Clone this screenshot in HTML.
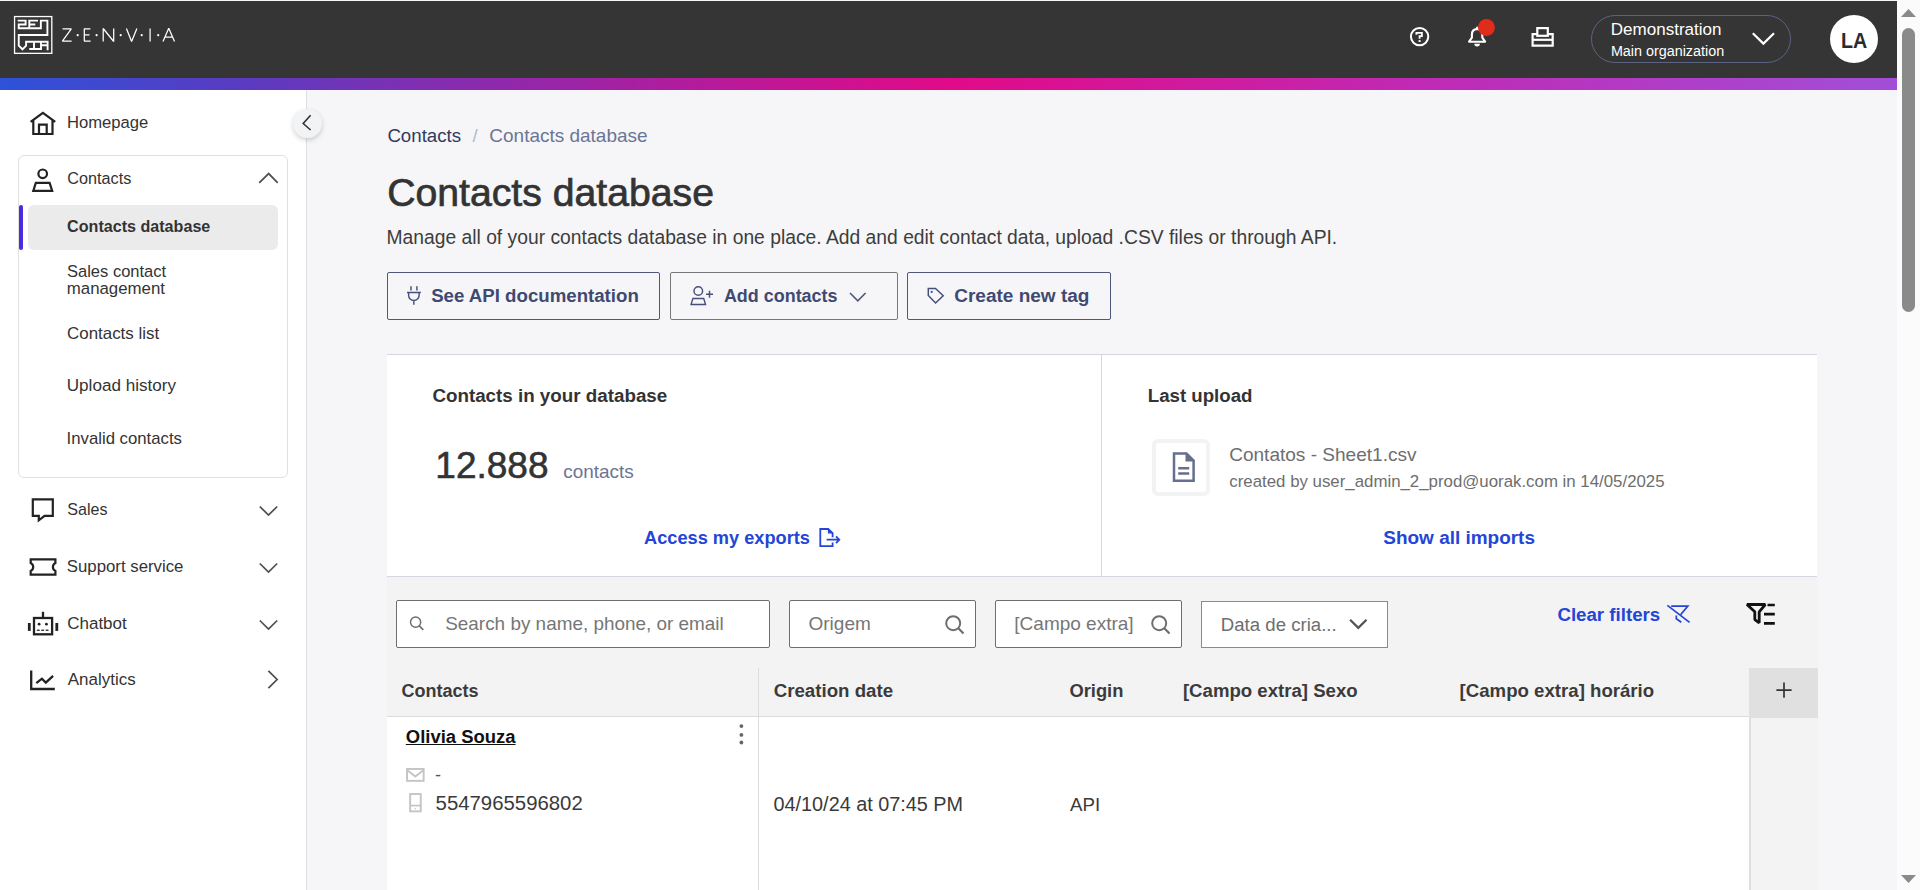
<!DOCTYPE html>
<html><head><meta charset="utf-8"><title>Contacts database</title>
<style>
html,body{margin:0;padding:0;width:1920px;height:890px;overflow:hidden;background:#fff;}
body{position:relative;font-family:"Liberation Sans",sans-serif;}
.t{position:absolute;white-space:nowrap;line-height:normal;}
.r{position:absolute;}
.s{position:absolute;overflow:visible;}
</style></head><body>
<div class="r" style="left:0px;top:0px;width:1897px;height:890px;background:#f6f6f8"></div>
<div class="r" style="left:0px;top:1px;width:1897px;height:77px;background:#353535"></div>
<div class="r" style="left:0px;top:78px;width:1897px;height:12px;background:linear-gradient(90deg,#2d52d9 0%,#5a3cc2 12.5%,#872caf 24%,#e10a88 50%,#c02ab4 75%,#a24ed8 100%)"></div>
<div class="r" style="left:0px;top:90px;width:306px;height:800px;background:#fff"></div>
<div class="r" style="left:306px;top:90px;width:1px;height:800px;background:#e0e0e0"></div>
<div class="r" style="left:1897px;top:0px;width:23px;height:890px;background:#fbfbfb"></div>
<svg class="s" style="left:1897px;top:0px;" width="23" height="890" viewBox="0 0 23 890"><path d="M4 17 L11.5 9 L19 17 Z" fill="#8a8a8a"/><rect x="5" y="28" width="13" height="284" rx="6.5" fill="#8a8a8a"/><path d="M4 875 L19 875 L11.5 883 Z" fill="#8a8a8a"/></svg>
<svg class="s" style="left:0px;top:0px" width="60" height="78" viewBox="0 0 60 78"><rect x="14.55" y="16.55" width="37.25" height="36.8" fill="none" stroke="#fff" stroke-width="1.3"/><g fill="none" stroke="#fff" stroke-width="1.9" stroke-linecap="butt" stroke-linejoin="miter"><path d="M17.7 20.6 H25.6 V24.5 H18.7 V28.3 H40.85 V20.6 H47.4 V35 H18.75 V45.6 L22.5 49.3 L26.1 45.6 V41.75 H47.6 V50.2"/><path d="M38 20.6 H29.3 V28.3 M29.3 24.5 H35.3"/><path d="M34 41.75 V49.05 M29.3 49.05 H41 V41.75 M41 45.25 H47.6"/></g></svg>
<svg class="s" style="left:0px;top:0px;" width="200" height="78" viewBox="0 0 200 78"><g fill="none" stroke="#fff" stroke-width="1.25" stroke-linejoin="bevel"><path d="M62.6 28.8 H71.3 L62.4 41.1 H71.6"/><path d="M90.4 28.8 H84.3 V41.1 H90.6 M84.3 34.8 H89.5"/><path d="M103.2 41.5 V28.5 L113.7 41.5 V28.5"/><path d="M126.4 28.6 L131.6 41.5 L136.9 28.6"/><path d="M150.1 28.6 V41.5"/><path d="M163 41.5 L168.75 28.3 L174.5 41.5 M165 37 H172.5"/></g><g fill="#fff"><circle cx="77.7" cy="35.2" r="1.1"/><circle cx="96.6" cy="35.2" r="1.1"/><circle cx="120.7" cy="35.2" r="1.1"/><circle cx="141.7" cy="35.2" r="1.1"/><circle cx="158.2" cy="35.2" r="1.1"/></g></svg>
<svg class="s" style="left:1400px;top:15px" width="40" height="40" viewBox="1400 15 40 40"><circle cx="1419.6" cy="36.6" r="8.7" fill="none" stroke="#fff" stroke-width="2"/><path d="M1416.4 34.8 V32.8 H1421.9 V36.1 H1419.6 V38.7" fill="none" stroke="#fff" stroke-width="1.8" stroke-linejoin="miter"/><rect x="1418.6" y="40.1" width="2" height="1.9" fill="#fff"/></svg>
<svg class="s" style="left:1460px;top:10px" width="45" height="45" viewBox="1460 10 45 45"><path d="M1477.1 28.9 Q1471.9 29.4 1471.9 34.6 V37.6 L1469.1 41.7 H1485.1 L1482.3 37.6 V34.6 Q1482.3 29.4 1477.1 28.9 Z" fill="none" stroke="#fff" stroke-width="2.1" stroke-linejoin="round"/><rect x="1476.2" y="26.7" width="1.9" height="2.4" fill="#fff"/><path d="M1474.3 43.8 H1479.9 A2.8 2.7 0 0 1 1474.3 43.8 Z" fill="#fff"/><circle cx="1486.4" cy="27.5" r="8.5" fill="#e02d1b"/></svg>
<svg class="s" style="left:1525px;top:15px" width="40" height="40" viewBox="1525 15 40 40"><g fill="none" stroke="#fff" stroke-width="2.2"><rect x="1537.3" y="28.1" width="10.5" height="7.7"/><path d="M1537.3 34.1 H1532.6 V45.7 H1552.7 V34.1 H1547.8"/><path d="M1532.6 39.8 H1552.7"/></g></svg>
<div class="r" style="left:1591px;top:15px;width:200px;height:48px;border:1px solid #5b6282;border-radius:24px;box-sizing:border-box"></div>
<div class="t" style="left:1610.79px;top:20.08px;font-size:17.04px;color:#fff;font-weight:400;">Demonstration</div>
<div class="t" style="left:1610.93px;top:43.01px;font-size:14.35px;color:#fff;font-weight:400;">Main organization</div>
<svg class="s" style="left:1745px;top:25px;" width="36" height="26" viewBox="0 0 36 26"><path d="M7.8 8.2 L18.4 18.6 L29 8.2" fill="none" stroke="#fff" stroke-width="2.2"/></svg>
<div class="r" style="left:1830px;top:15px;width:48px;height:48px;background:#fff;border-radius:50%"></div>
<div class="t" style="left:1840.50px;top:26.98px;font-size:22.90px;color:#2b2b2b;font-weight:700;transform:scaleX(0.86);transform-origin:0 0;">LA</div>
<div class="r" style="left:293px;top:109px;width:29px;height:29px;background:#f2f3f5;border-radius:50%;box-shadow:0 2px 5px rgba(0,0,0,0.18)"></div>
<svg class="s" style="left:293px;top:109px;" width="29" height="29" viewBox="0 0 29 29"><path d="M17.6 6.2 L10.2 14.5 L17.6 21" fill="none" stroke="#333" stroke-width="1.6"/></svg>
<svg class="s" style="left:26px;top:106px;" width="34" height="34" viewBox="0 0 34 34"><g fill="none" stroke="#222" stroke-width="2.2"><path d="M4.6 15.8 L16.9 6.8 L29.2 15.8 M7.3 14 V28 H26.5 V14"/><path d="M13 28 V18.7 H20.7 V28"/></g></svg>
<div class="t" style="left:67.01px;top:113.04px;font-size:16.64px;color:#333;font-weight:400;">Homepage</div>
<div class="r" style="left:18px;top:155px;width:270px;height:323px;border:1px solid #e0e0e0;border-radius:6px;box-sizing:border-box"></div>
<svg class="s" style="left:26px;top:162px;" width="34" height="34" viewBox="0 0 34 34"><g fill="none" stroke="#222" stroke-width="2.2"><circle cx="16.7" cy="11.8" r="4.3"/><path d="M9.8 20.9 H23.6 L26.2 28.8 H7.3 Z" stroke-linejoin="miter"/></g></svg>
<div class="t" style="left:67.36px;top:169.02px;font-size:16.22px;color:#333;font-weight:400;">Contacts</div>
<svg class="s" style="left:255px;top:168px;" width="28" height="20" viewBox="0 0 28 20"><path d="M4.2 14.9 L13.7 5.6 L22.7 14.9" fill="none" stroke="#505050" stroke-width="1.75"/></svg>
<div class="r" style="left:28px;top:205px;width:250px;height:45px;background:#ebebeb;border-radius:6px"></div>
<div class="r" style="left:19px;top:205px;width:4px;height:45px;background:#4b2ae0;border-radius:2px"></div>
<div class="t" style="left:67.07px;top:217.41px;font-size:16.12px;color:#333;font-weight:700;">Contacts database</div>
<div class="t" style="left:67.01px;top:262.05px;font-size:16.52px;color:#333;font-weight:400;">Sales contact</div>
<div class="t" style="left:66.77px;top:278.96px;font-size:16.84px;color:#333;font-weight:400;">management</div>
<div class="t" style="left:67.04px;top:324.00px;font-size:16.91px;color:#333;font-weight:400;">Contacts list</div>
<div class="t" style="left:66.74px;top:376.42px;font-size:17.10px;color:#333;font-weight:400;">Upload history</div>
<div class="t" style="left:66.60px;top:428.75px;font-size:16.74px;color:#333;font-weight:400;">Invalid contacts</div>
<svg class="s" style="left:26px;top:492px" width="34" height="34" viewBox="26 492 34 34"><path d="M32.8 499.4 H52.8 V515.8 H44.5 L38.8 520.3 V515.8 H32.8 Z" fill="none" stroke="#222" stroke-width="2.2" stroke-linejoin="miter"/></svg>
<div class="t" style="left:67.32px;top:500.43px;font-size:16.10px;color:#333;font-weight:400;">Sales</div>
<svg class="s" style="left:26px;top:552px" width="34" height="34" viewBox="26 552 34 34"><path d="M30.7 559.4 H55.4 V563 A4.45 4.45 0 0 0 55.4 571 V574.7 H30.7 V571 A4.45 4.45 0 0 0 30.7 563 Z" fill="none" stroke="#222" stroke-width="2.2"/></svg>
<div class="t" style="left:66.80px;top:556.60px;font-size:16.80px;color:#333;font-weight:400;">Support service</div>
<svg class="s" style="left:26px;top:606px;" width="34" height="34" viewBox="0 0 34 34"><g fill="none" stroke="#222" stroke-width="2.3"><rect x="8" y="12" width="18.1" height="16.3"/><path d="M17 5.8 V12"/></g><g fill="#222"><rect x="1.9" y="17" width="2.8" height="7.9"/><rect x="29.4" y="17" width="2.8" height="7.9"/><circle cx="13.1" cy="18.2" r="1.4"/><circle cx="20.4" cy="18.2" r="1.4"/><rect x="10.9" y="23.6" width="2.8" height="1.3"/><rect x="15.3" y="23.6" width="2.8" height="1.3"/><rect x="19.7" y="23.6" width="2.8" height="1.3"/></g></svg>
<div class="t" style="left:67.24px;top:613.62px;font-size:16.99px;color:#333;font-weight:400;">Chatbot</div>
<svg class="s" style="left:26px;top:664px;" width="34" height="34" viewBox="0 0 34 34"><g fill="none" stroke="#222" stroke-width="2.3"><path d="M5.2 6.5 V25 H28.8"/><path d="M10.3 19.1 L15.9 14.7 L19.8 18.6 L27.1 11.8"/></g></svg>
<div class="t" style="left:67.78px;top:670.24px;font-size:16.97px;color:#333;font-weight:400;">Analytics</div>
<svg class="s" style="left:255px;top:500px;" width="28" height="20" viewBox="0 0 28 20"><path d="M4.8 6.5 L13.5 15.1 L22.2 6.5" fill="none" stroke="#505050" stroke-width="1.75"/></svg>
<svg class="s" style="left:255px;top:557px;" width="28" height="20" viewBox="0 0 28 20"><path d="M4.8 6.5 L13.5 15.1 L22.2 6.5" fill="none" stroke="#505050" stroke-width="1.75"/></svg>
<svg class="s" style="left:255px;top:614px;" width="28" height="20" viewBox="0 0 28 20"><path d="M4.8 6.5 L13.5 15.1 L22.2 6.5" fill="none" stroke="#505050" stroke-width="1.75"/></svg>
<svg class="s" style="left:258px;top:666px" width="24" height="28" viewBox="258 666 24 28"><path d="M268.4 670.9 L277.1 679.5 L268.4 688.2" fill="none" stroke="#505050" stroke-width="1.75"/></svg>
<div class="t" style="left:387.38px;top:125.09px;font-size:18.68px;color:#303a5e;font-weight:400;">Contacts</div>
<div class="t" style="left:472.50px;top:125.09px;font-size:18.68px;color:#b3b9cb;font-weight:400;">/</div>
<div class="t" style="left:489.37px;top:124.82px;font-size:18.98px;color:#6b7594;font-weight:400;">Contacts database</div>
<div class="t" style="left:387.21px;top:170.62px;font-size:39.20px;color:#333;font-weight:400;-webkit-text-stroke:0.7px #333;">Contacts database</div>
<div class="t" style="left:386.47px;top:226.64px;font-size:19.29px;color:#3d3d3d;font-weight:400;">Manage all of your contacts database in one place. Add and edit contact data, upload .CSV files or through API.</div>
<div class="r" style="left:387px;top:272px;width:273px;height:48px;border:1px solid #4e5878;border-radius:2px;box-sizing:border-box"></div>
<svg class="s" style="left:400px;top:280px" width="30" height="32" viewBox="400 280 30 32"><g fill="none" stroke="#46507a" stroke-width="1.45"><path d="M411 286.2 V290.4 M416.9 286.2 V290.4 M407 292.4 H420.9 M408.6 292.4 V295.3 A5.25 5.25 0 0 0 419.1 295.3 V292.4 M413.85 300.6 V304.8"/></g></svg>
<div class="t" style="left:431.15px;top:284.60px;font-size:18.67px;color:#3f4a72;font-weight:700;">See API documentation</div>
<div class="r" style="left:670px;top:272px;width:228px;height:48px;border:1px solid #777;border-radius:2px;box-sizing:border-box"></div>
<svg class="s" style="left:685px;top:280px" width="34" height="32" viewBox="685 280 34 32"><g fill="none" stroke="#46507a" stroke-width="1.45"><circle cx="698.3" cy="291" r="4.3"/><path d="M692.9 298.4 H703.7 L705.5 304.4 H691.1 Z"/><path d="M706 294.2 H713 M709.5 290.7 V297.7"/></g></svg>
<div class="t" style="left:723.91px;top:285.86px;font-size:17.94px;color:#3f4a72;font-weight:700;">Add contacts</div>
<svg class="s" style="left:845px;top:285px;" width="26" height="22" viewBox="0 0 26 22"><path d="M5 8 L12.8 15.8 L20.6 8" fill="none" stroke="#4e5878" stroke-width="1.6"/></svg>
<div class="r" style="left:907px;top:272px;width:204px;height:48px;border:1px solid #4e5878;border-radius:2px;box-sizing:border-box"></div>
<svg class="s" style="left:920px;top:280px" width="30" height="30" viewBox="920 280 30 30"><path d="M928.3 288.5 H935.5 L943.2 295.8 L935.6 303 L928.3 295.4 Z" fill="none" stroke="#46507a" stroke-width="1.5" stroke-linejoin="miter"/><circle cx="931.7" cy="291.9" r="1.1" fill="#46507a"/></svg>
<div class="t" style="left:954.19px;top:284.89px;font-size:19.02px;color:#3f4a72;font-weight:700;">Create new tag</div>
<div class="r" style="left:387px;top:354px;width:1430px;height:223px;background:#fff;border-top:1px solid #d4d7df;border-bottom:1px solid #d4d7df;box-sizing:border-box"></div>
<div class="r" style="left:1101px;top:355px;width:1px;height:221px;background:#d4d7df"></div>
<div class="t" style="left:432.40px;top:384.99px;font-size:18.80px;color:#333;font-weight:700;">Contacts in your database</div>
<div class="t" style="left:435.37px;top:444.62px;font-size:37.00px;color:#333;font-weight:400;-webkit-text-stroke:0.6px #333;">12.888</div>
<div class="t" style="left:563.28px;top:461.34px;font-size:18.96px;color:#6b7594;font-weight:400;">contacts</div>
<div class="t" style="left:644.11px;top:528.14px;font-size:18.19px;color:#2445d6;font-weight:700;">Access my exports</div>
<svg class="s" style="left:814px;top:524px" width="32" height="28" viewBox="814 524 32 28"><g fill="none" stroke="#2445d6" stroke-width="1.8" stroke-linejoin="miter"><path d="M832.6 537.2 V533.1 L828.2 529 H820.3 V546.2 H832.6 V542.4"/><path d="M826.6 539.7 H839 M836 536.3 L839.3 539.7 L836 543.1"/></g><path d="M827.9 528.3 V533.5 H833.4 Z" fill="#2445d6"/></svg>
<div class="t" style="left:1147.79px;top:385.01px;font-size:18.66px;color:#333;font-weight:700;">Last upload</div>
<div class="r" style="left:1152px;top:439px;width:58px;height:57px;border:4px solid #f2f3f5;border-radius:6px;box-sizing:border-box"></div>
<svg class="s" style="left:1152px;top:439px;" width="58" height="57" viewBox="0 0 58 57"><path d="M22 14.5 H34.5 L41.6 21.6 V41.8 H22 Z" fill="none" stroke="#666f8c" stroke-width="2.5"/><path d="M33.5 13.2 L42.9 22.6 H33.5 Z" fill="#666f8c"/><path d="M26.2 29.3 H37.2 M26.2 34.6 H37.2" stroke="#666f8c" stroke-width="2.5"/></svg>
<div class="t" style="left:1229.17px;top:443.75px;font-size:19.06px;color:#6e6e6e;font-weight:400;">Contatos - Sheet1.csv</div>
<div class="t" style="left:1229.34px;top:472.26px;font-size:16.84px;color:#6e6e6e;font-weight:400;">created by user_admin_2_prod@uorak.com in 14/05/2025</div>
<div class="t" style="left:1383.34px;top:527.23px;font-size:18.97px;color:#2445d6;font-weight:700;">Show all imports</div>
<div class="r" style="left:387px;top:577px;width:1431px;height:313px;background:#f3f3f3"></div>
<div class="r" style="left:396px;top:600px;width:374px;height:48px;background:#fff;border:1px solid #6e6e6e;border-radius:2px;box-sizing:border-box"></div>
<svg class="s" style="left:405px;top:612px;" width="24" height="24" viewBox="0 0 24 24"><circle cx="10.6" cy="10.2" r="5.1" fill="none" stroke="#6e6e6e" stroke-width="1.5"/><path d="M14.3 13.9 L18.3 17.9" stroke="#6e6e6e" stroke-width="1.6"/></svg>
<div class="t" style="left:445.24px;top:612.89px;font-size:18.91px;color:#767676;font-weight:400;">Search by name, phone, or email</div>
<div class="r" style="left:789px;top:600px;width:187px;height:48px;background:#fff;border:1px solid #6e6e6e;border-radius:2px;box-sizing:border-box"></div>
<div class="t" style="left:808.52px;top:613.30px;font-size:19.00px;color:#767676;font-weight:400;">Origem</div>
<svg class="s" style="left:940px;top:611px;" width="30" height="26" viewBox="0 0 30 26"><circle cx="13.2" cy="12.2" r="7" fill="none" stroke="#6e6e6e" stroke-width="2"/><path d="M18.3 17.3 L23.5 22.5" stroke="#6e6e6e" stroke-width="2.2"/></svg>
<div class="r" style="left:995px;top:600px;width:187px;height:48px;background:#fff;border:1px solid #6e6e6e;border-radius:2px;box-sizing:border-box"></div>
<div class="r" style="left:1012px;top:605px;width:122px;height:38px;overflow:hidden"><div class="t" style="left:2.32px;top:8.30px;font-size:19.00px;color:#767676;font-weight:400;">[Campo extra]</div></div>
<svg class="s" style="left:1146px;top:611px;" width="30" height="26" viewBox="0 0 30 26"><circle cx="13.2" cy="12.2" r="7" fill="none" stroke="#6e6e6e" stroke-width="2"/><path d="M18.3 17.3 L23.5 22.5" stroke="#6e6e6e" stroke-width="2.2"/></svg>
<div class="r" style="left:1201px;top:601px;width:187px;height:47px;background:#fff;border:1px solid #8a8a8a;box-sizing:border-box"></div>
<div class="t" style="left:1220.81px;top:614.15px;font-size:18.62px;color:#6e6e6e;font-weight:400;">Data de cria...</div>
<svg class="s" style="left:1345px;top:612px;" width="26" height="22" viewBox="0 0 26 22"><path d="M5.1 7.8 L13.3 15.9 L21.5 7.8" fill="none" stroke="#555" stroke-width="2.3"/></svg>
<div class="t" style="left:1557.40px;top:603.78px;font-size:18.70px;color:#2445d6;font-weight:700;">Clear filters</div>
<svg class="s" style="left:1660px;top:598px" width="40" height="32" viewBox="1660 598 40 32"><g fill="none" stroke="#2445d6" stroke-width="1.7"><path d="M1667.4 605.3 L1689.6 622.3"/><path d="M1671.2 606.1 H1687.8 L1680.6 614.8"/><path d="M1676.3 615.4 V618.8 L1681.3 622.2"/></g></svg>
<svg class="s" style="left:1740px;top:598px" width="40" height="32" viewBox="1740 598 40 32"><path d="M1747 604.5 H1765.3 L1759.2 611.8 V622.8 L1754.8 619.6 V611.8 Z" fill="none" stroke="#111" stroke-width="2.8" stroke-linejoin="bevel"/><path d="M1767.5 605 H1774.8 M1764 614.1 H1774.8 M1764 623.3 H1774.8" stroke="#111" stroke-width="2.7"/></svg>
<div class="r" style="left:387px;top:668px;width:1362px;height:49px;background:#f3f3f3"></div>
<div class="r" style="left:387px;top:716px;width:1362px;height:1px;background:#dcdcdc"></div>
<div class="r" style="left:758px;top:668px;width:1px;height:222px;background:#dcdcdc"></div>
<div class="t" style="left:401.42px;top:680.71px;font-size:18.00px;color:#3b3b3b;font-weight:700;">Contacts</div>
<div class="t" style="left:773.70px;top:679.98px;font-size:18.70px;color:#3b3b3b;font-weight:700;">Creation date</div>
<div class="t" style="left:1069.41px;top:680.40px;font-size:18.34px;color:#3b3b3b;font-weight:700;">Origin</div>
<div class="t" style="left:1182.92px;top:680.15px;font-size:18.62px;color:#3b3b3b;font-weight:700;">[Campo extra] Sexo</div>
<div class="t" style="left:1459.62px;top:680.13px;font-size:18.64px;color:#3b3b3b;font-weight:700;">[Campo extra] horário</div>
<div class="r" style="left:1749px;top:668px;width:69px;height:50px;background:#e0e0e0"></div>
<div class="r" style="left:1749px;top:718px;width:69px;height:172px;background:#f3f3f3"></div>
<div class="r" style="left:1749px;top:718px;width:2px;height:172px;background:#dedede"></div>
<svg class="s" style="left:1770px;top:678px;" width="28" height="28" viewBox="0 0 28 28"><path d="M14 4.5 V19.8 M6.4 12.2 H21.6" stroke="#333" stroke-width="1.7"/></svg>
<div class="r" style="left:387px;top:717px;width:1362px;height:173px;background:#fff"></div>
<div class="r" style="left:758px;top:717px;width:1px;height:173px;background:#dcdcdc"></div>
<div class="t" style="left:405.81px;top:725.78px;font-size:18.47px;color:#111;font-weight:700;"><u style="text-underline-offset:1px">Olivia Souza</u></div>
<svg class="s" style="left:734px;top:720px;" width="14" height="30" viewBox="0 0 14 30"><g fill="#666"><circle cx="7.4" cy="6.1" r="1.9"/><circle cx="7.4" cy="14.9" r="1.9"/><circle cx="7.4" cy="22.5" r="1.9"/></g></svg>
<svg class="s" style="left:402px;top:762px" width="28" height="24" viewBox="402 762 28 24"><rect x="407.05" y="768.95" width="16.6" height="11.9" fill="none" stroke="#c4c4c4" stroke-width="1.9"/><path d="M407.3 770.2 L415.35 776.6 L423.4 770.2" fill="none" stroke="#c4c4c4" stroke-width="1.9"/></svg>
<div class="t" style="left:434.98px;top:764.71px;font-size:18.00px;color:#555;font-weight:400;">-</div>
<svg class="s" style="left:402px;top:788px" width="28" height="28" viewBox="402 788 28 28"><rect x="410.15" y="794.05" width="10.6" height="17.3" fill="none" stroke="#c4c4c4" stroke-width="1.9"/><path d="M410.2 805.6 H420.7" stroke="#c4c4c4" stroke-width="1.7"/><rect x="414.6" y="808.1" width="1.3" height="1.2" fill="#c4c4c4"/></svg>
<div class="t" style="left:435.57px;top:791.56px;font-size:20.38px;color:#3a3a3a;font-weight:400;">5547965596802</div>
<div class="t" style="left:773.50px;top:793.25px;font-size:19.83px;color:#3a3a3a;font-weight:400;">04/10/24 at 07:45 PM</div>
<div class="t" style="left:1070.08px;top:794.30px;font-size:18.67px;color:#3a3a3a;font-weight:400;">API</div>
</body></html>
